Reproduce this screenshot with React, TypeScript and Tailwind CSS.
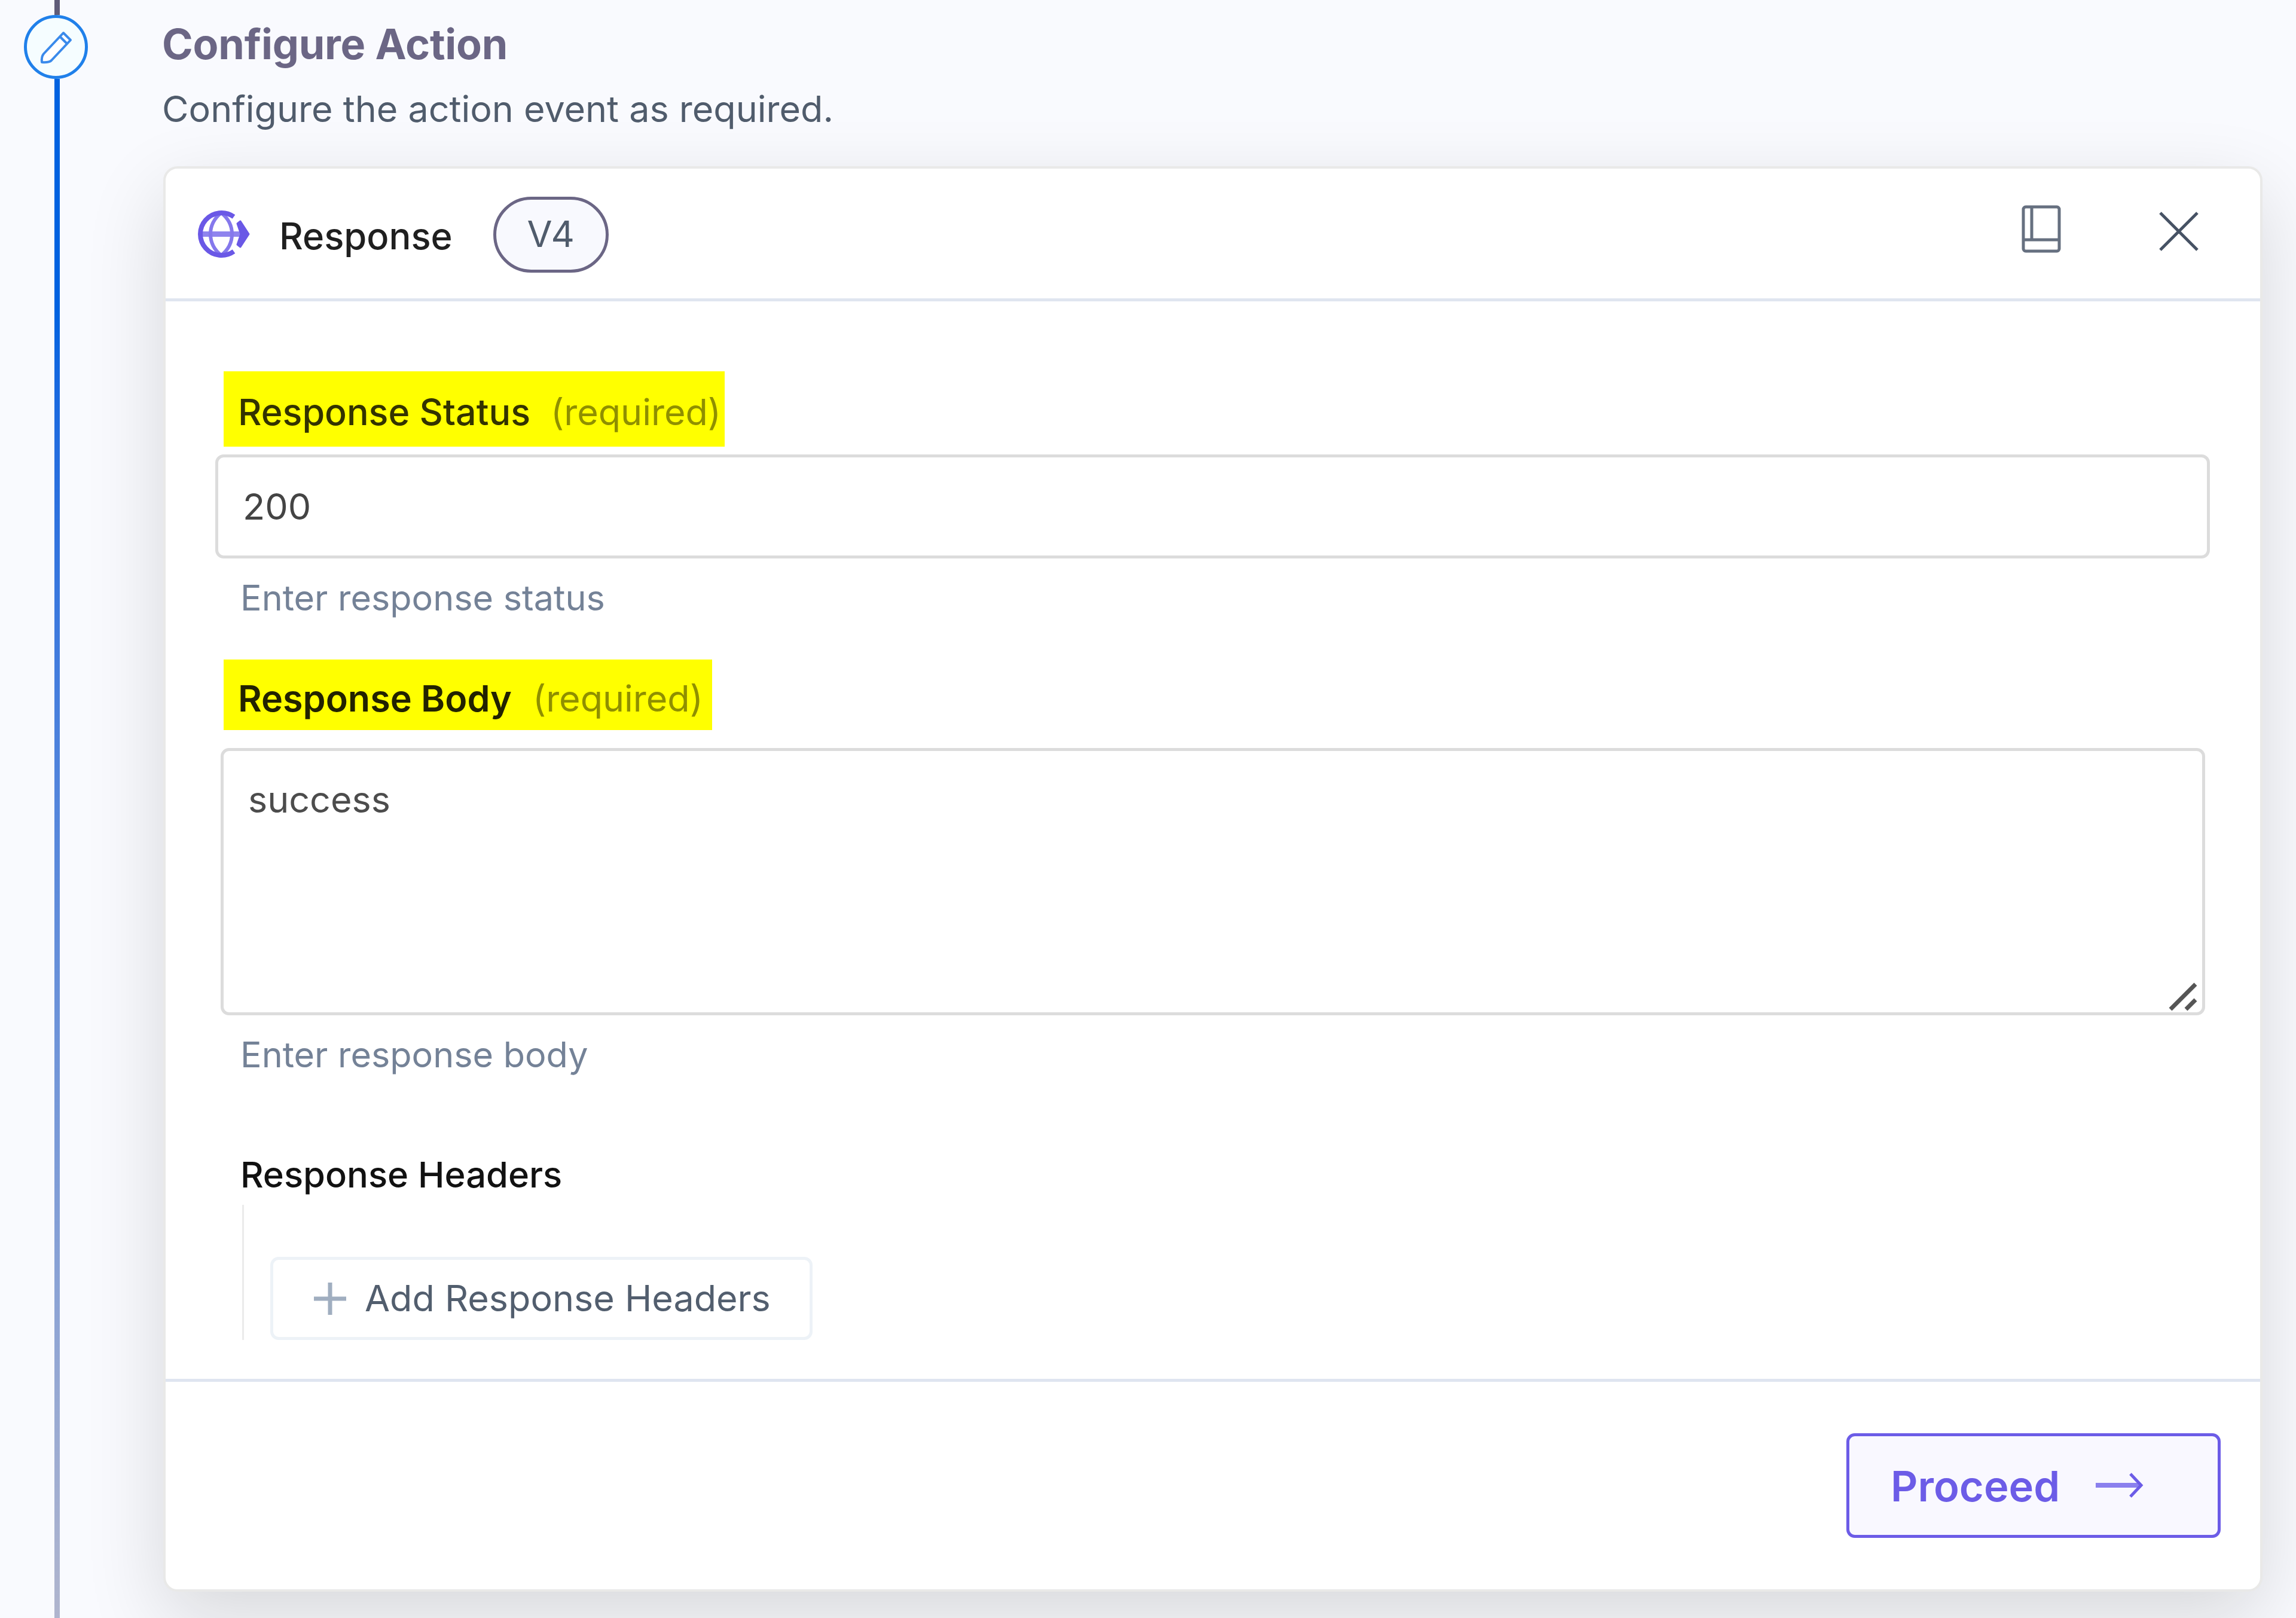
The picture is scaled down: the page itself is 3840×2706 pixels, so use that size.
import type { ReactNode } from 'react'

const FIELD_TEXT = 'text-[61px] leading-[72px]'
const HELPER_TEXT = 'text-[59.3px] leading-[72px]'

function PencilIcon() {
  return (
    <svg className="h-[60px] w-[60px]" viewBox="0 0 60 60" fill="none" stroke="#3a8aeb" strokeWidth="4" strokeLinejoin="round">
      <path d="M6 55 Q5 46 9 41 L42 6 L54 18 L22 52 Q18 56 6 55 Z" fill="#fff" />
      <path d="M36 12 L48 24" />
    </svg>
  )
}

function GlobeIcon() {
  return (
    <svg className="h-[88px] w-[92px]" viewBox="0 0 92 88" fill="none" stroke="#6a58e6" strokeWidth="8">
      <path d="M8 44.5 H76" strokeWidth="9" stroke="#8f84ee" />
      <path d="M43 9 C19 28 19 61 43 80 C67 61 67 28 43 9 Z" strokeWidth="6" stroke="#8578ec" />
      <path d="M64 15.500 A35.500 35.500 0 1 0 64 73.500" />
      <path d="M70 27 L75 23 L89 44.500 L75 66 L70 62 L76 44.500 Z" fill="#6a58e6" stroke="#6a58e6" strokeWidth="3" strokeLinejoin="round" />
    </svg>
  )
}

function BookIcon() {
  return (
    <svg className="h-[80px] w-[66px]" viewBox="0 0 66 80" fill="none" stroke="#667080" strokeWidth="5">
      <rect x="3" y="3" width="60" height="74" rx="4" />
      <path d="M17 3 V58 M3 58 H63" />
    </svg>
  )
}

function CloseIcon() {
  return (
    <svg className="h-[66px] w-[66px]" viewBox="0 0 66 66" fill="none" stroke="#465264" strokeWidth="5">
      <path d="M2 2 L64 64 M64 2 L2 64" />
    </svg>
  )
}

function Required({ children }: { children: ReactNode }) {
  return <span className="font-normal text-[#8f8f00]">{children}</span>
}

export default function App() {
  return (
    <div className="flex h-[2706px] w-[3840px] overflow-hidden bg-[#f9fafe] font-['Inter',sans-serif] whitespace-nowrap">
      {/* Stepper rail */}
      <div className="flex w-[187px] shrink-0 flex-col items-center">
        <div className="ml-[4px] h-[25px] w-[9px] bg-[#605c78]" />
        <div className="flex h-[107px] w-[107px] shrink-0 items-center justify-center rounded-full border-[5px] border-[#2080ea] bg-[#f5fdff]">
          <PencilIcon />
        </div>
        <div className="ml-[4px] w-[9px] flex-1 bg-linear-to-b from-[#0062e0] from-15% to-[#b0b5ce]" />
      </div>

      <div className="ml-[86px] w-[3511px]">
        <h2 className="mt-[32px] -ml-[2px] text-[70px] leading-[84px] font-bold tracking-[-0.003em] text-[#6b6685]">Configure Action</h2>
        <p className="mt-[30px] -ml-[2px] text-[61px] leading-[72px] text-[#505c6c]">Configure the action event as required.</p>

        {/* Action card */}
        <div className="mt-[60px] h-[2384px] rounded-[24px] border-4 border-[#e9e9e8] bg-white shadow-[0_46px_132px_rgba(15,15,0,0.14)]">
          <div className="flex h-[222px] items-center border-b-[5px] border-[#dfe5f0] pl-[50px]">
            <GlobeIcon />
            <span className="ml-[48px] pt-[8px] text-[61.5px] leading-[72px] font-medium text-[#1f1f1f]">Response</span>
            <span className="mt-[3px] ml-[68px] flex h-[127px] w-[193px] items-center justify-center rounded-full border-[5px] border-[#6b6685] bg-[#f8f9fe] text-[61px] text-[#505c6c]">
              V4
            </span>
            <div className="mr-[103px] ml-auto flex items-center gap-[164px]">
              <div className="mb-[16px]">
                <BookIcon />
              </div>
              <div className="mb-[8px]">
                <CloseIcon />
              </div>
            </div>
          </div>

          <div className="flex h-[1807px] flex-col items-start border-b-[5px] border-[#dfe5f0] pr-[84px] pl-[83px]">
            <label className="mt-[117px] ml-[14px] flex h-[126px] w-[838px] items-center gap-[34px] bg-[#ff0] pt-[11px] pl-[24px] text-[61px] font-medium text-[#333300]">
              Response Status <Required>(required)</Required>
            </label>
            <div className={`mt-[13px] flex h-[174px] w-full items-center rounded-[14px] border-[5px] border-[#dcdcdc] pl-[41px] text-[#444] ${FIELD_TEXT}`}>
              200
            </div>
            <p className={`mt-[30px] ml-[42px] text-[#748297] ${HELPER_TEXT}`}>Enter response status</p>

            <label className="mt-[67px] ml-[14px] flex h-[118px] w-[817px] items-center gap-[35px] bg-[#ff0] pt-[14px] pl-[24px] text-[61px] font-semibold text-[#222200]">
              Response Body <Required>(required)</Required>
            </label>
            <div className={`mt-[30px] ml-[9px] flex h-[447px] w-[3319px] items-start justify-between rounded-[14px] border-[5px] border-[#dcdcdc] text-[#4c4c4c] ${FIELD_TEXT}`}>
              <span className="mt-[45px] ml-[41px]">success</span>
              <svg className="mr-[7px] h-[50px] w-[50px] self-end" viewBox="0 0 50 50" stroke="#555" strokeWidth="7">
                <path d="M4 45 L46 3 M30 45 L46 29" />
              </svg>
            </div>
            <p className={`mt-[30px] ml-[42px] text-[#748297] ${HELPER_TEXT}`}>Enter response body</p>

            <h3 className="mt-[128px] ml-[42px] text-[59.7px] leading-[72px] font-medium text-[#111]">Response Headers</h3>
            <div className="mt-[15px] ml-[45px] flex h-[226px] items-end border-l-[3px] border-[#ebebeb] pl-[44px]">
              <button className="flex h-[139px] w-[907px] items-center rounded-[14px] border-[5px] border-[#edf2f7] pl-[68px] text-[61px] text-[#525e6e]">
                <svg className="mr-[31px] h-[54px] w-[54px]" viewBox="0 0 54 54" stroke="#a0aec0" strokeWidth="7">
                  <path d="M0 27 H54 M27 0 V54" />
                </svg>
                Add Response Headers
              </button>
            </div>
          </div>

          <div className="flex justify-end pt-[86px] pr-[66px]">
            <button className="flex h-[175px] w-[626px] items-center rounded-[14px] border-[5px] border-[#6c5ce7] bg-[#f9f8ff] pt-[2px] pl-[69px] text-[70.5px] font-semibold text-[#6c5ce7]">
              Proceed
              <svg className="mb-[3px] ml-[60px] h-[44px] w-[80px]" viewBox="0 0 80 44" fill="none" stroke="#6c5ce7" strokeWidth="5">
                <path d="M0 22 H76" strokeWidth="8" stroke="#8b80ee" />
                <path d="M58 3 L76 22 L58 41" />
              </svg>
            </button>
          </div>
        </div>
      </div>
    </div>
  )
}
